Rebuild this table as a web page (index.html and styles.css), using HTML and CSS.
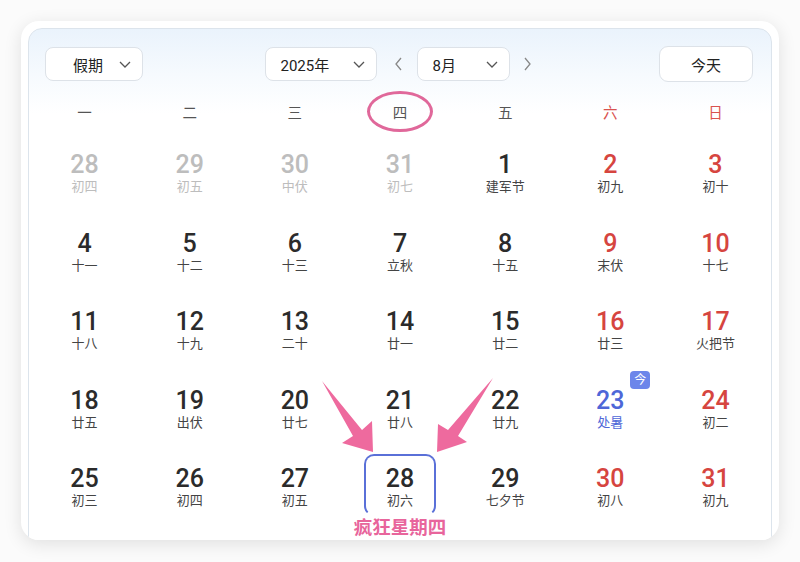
FILE: index.html
```html
<!DOCTYPE html>
<html lang="zh">
<head>
<meta charset="utf-8">
<link rel="stylesheet" href="styles.css">
</head>
<body>
<div class="card">
  <div class="panel">
    <div class="toolbar">
      <div class="left">
        <div class="select select-wide"><span>假期</span><svg class="chev" viewBox="0 0 12 7"><path d="M1 1l5 5 5-5"/></svg></div>
      </div>
      <div class="center">
        <div class="select year"><span>2025年</span><svg class="chev" viewBox="0 0 12 7"><path d="M1 1l5 5 5-5"/></svg></div>
        <svg class="nav prev" viewBox="0 0 20 20"><path d="M12 4l-5 6 5 6"/></svg>
        <div class="select month"><span>8月</span><svg class="chev" viewBox="0 0 12 7"><path d="M1 1l5 5 5-5"/></svg></div>
        <svg class="nav next" viewBox="0 0 20 20"><path d="M8 4l5 6-5 6"/></svg>
      </div>
      <div class="right">
        <div class="today-btn">今天</div>
      </div>
    </div>

    <div class="weekdays">
      <div>一</div><div>二</div><div>三</div><div class="circled">四</div><div>五</div><div class="red">六</div><div class="red">日</div>
    </div>

    <div class="days">
      <div class="day muted"><b>28</b><i>初四</i></div>
      <div class="day muted"><b>29</b><i>初五</i></div>
      <div class="day muted"><b>30</b><i>中伏</i></div>
      <div class="day muted"><b>31</b><i>初七</i></div>
      <div class="day"><b>1</b><i>建军节</i></div>
      <div class="day red"><b>2</b><i>初九</i></div>
      <div class="day red"><b>3</b><i>初十</i></div>

      <div class="day"><b>4</b><i>十一</i></div>
      <div class="day"><b>5</b><i>十二</i></div>
      <div class="day"><b>6</b><i>十三</i></div>
      <div class="day"><b>7</b><i>立秋</i></div>
      <div class="day"><b>8</b><i>十五</i></div>
      <div class="day red"><b>9</b><i>末伏</i></div>
      <div class="day red"><b>10</b><i>十七</i></div>

      <div class="day"><b>11</b><i>十八</i></div>
      <div class="day"><b>12</b><i>十九</i></div>
      <div class="day"><b>13</b><i>二十</i></div>
      <div class="day"><b>14</b><i>廿一</i></div>
      <div class="day"><b>15</b><i>廿二</i></div>
      <div class="day red"><b>16</b><i>廿三</i></div>
      <div class="day red"><b>17</b><i>火把节</i></div>

      <div class="day"><b>18</b><i>廿五</i></div>
      <div class="day"><b>19</b><i>出伏</i></div>
      <div class="day"><b>20</b><i>廿七</i></div>
      <div class="day"><b>21</b><i>廿八</i></div>
      <div class="day"><b>22</b><i>廿九</i></div>
      <div class="day today"><span class="badge">今</span><b>23</b><i>处暑</i></div>
      <div class="day red"><b>24</b><i>初二</i></div>

      <div class="day"><b>25</b><i>初三</i></div>
      <div class="day"><b>26</b><i>初四</i></div>
      <div class="day"><b>27</b><i>初五</i></div>
      <div class="day boxed"><b>28</b><i>初六</i><span class="caption">疯狂星期四</span></div>
      <div class="day"><b>29</b><i>七夕节</i></div>
      <div class="day red"><b>30</b><i>初八</i></div>
      <div class="day red"><b>31</b><i>初九</i></div>
    </div>

    <svg class="arrows" viewBox="0 0 800 562">
      <polygon points="322,381 362,430 372,421 373,452 342,443 353,436"/>
      <polygon points="493,378 458,436 467,442 437,452 438,424 448,430"/>
    </svg>
  </div>
</div>
</body>
</html>
```

FILE: styles.css
```css
html, body {
  margin: 0;
  padding: 0;
}
body {
  width: 800px;
  height: 562px;
  background: #fbfbfb;
  font-family: Roboto, "Noto Sans CJK SC", sans-serif;
  overflow: hidden;
}
.card {
  margin: 21px 0 0 21px;
  width: 758px;
  height: 519px;
  background: #fff;
  border-radius: 18px;
  box-shadow: 0 4px 18px rgba(0,0,0,0.11);
  padding: 7px 7px 0 7px;
  box-sizing: border-box;
  overflow: hidden;
}
.panel {
  height: 560px;
  border: 1px solid #dce4ec;
  border-radius: 14px;
  background: linear-gradient(180deg, #eaf3fc 0px, #f6fafe 45px, #ffffff 85px);
  padding: 17px 3px 0 3px;
  box-sizing: border-box;
}
.toolbar {
  display: grid;
  grid-template-columns: 1fr auto 1fr;
  align-items: center;
  height: 34px;
  padding: 0 15px 0 13px;
}
.left { display: flex; }
.right { display: flex; justify-content: flex-end; }
.center {
  display: flex;
  align-items: center;
  margin-left: 3px;
}
.select {
  height: 34px;
  box-sizing: border-box;
  border: 1px solid #dde2e8;
  border-radius: 8px;
  background: #fff;
  display: flex;
  align-items: center;
  justify-content: space-between;
  padding: 0 11px 0 15px;
  font-size: 15px;
  color: #222;
}
.select-wide { width: 98px; padding-left: 27px; }
.year { width: 112px; }
.month { width: 93px; }
.chev {
  width: 12px;
  height: 7px;
  fill: none;
  stroke: #555;
  stroke-width: 1.3;
}
.nav {
  width: 20px;
  height: 20px;
  fill: none;
  stroke: #888;
  stroke-width: 1.3;
}
.prev { margin: 0 8px 0 12px; }
.next { margin: 0 0 0 7px; }
.today-btn {
  width: 94px;
  height: 36px;
  box-sizing: border-box;
  border: 1px solid #dde2e8;
  border-radius: 9px;
  background: #fff;
  display: flex;
  align-items: center;
  justify-content: center;
  font-size: 15px;
  color: #222;
}
.weekdays {
  margin-top: 11px;
  display: grid;
  grid-template-columns: repeat(7, 1fr);
  height: 40px;
  align-items: center;
  text-align: center;
  font-size: 14.5px;
  color: #555;
  margin-bottom: 4px;
}
.weekdays .red { color: #d9534f; }
.circled { position: relative; }
.circled::after {
  content: "";
  position: absolute;
  left: 50%;
  top: 50%;
  width: 60px;
  height: 35px;
  margin: -20.5px 0 0 -33px;
  border: 3px solid #e0689a;
  border-radius: 50%;
}
.days {
  display: grid;
  grid-template-columns: repeat(7, 1fr);
  grid-auto-rows: 78.5px;
}
.day {
  position: relative;
  display: flex;
  flex-direction: column;
  align-items: center;
  padding-top: 16px;
  box-sizing: border-box;
}
.day b {
  font-family: Roboto, sans-serif;
  font-weight: 500;
  font-size: 25px;
  line-height: 27px;
  color: #2b2b2b;
}
.day i {
  font-style: normal;
  font-size: 13px;
  line-height: 18px;
  color: #444;
}
.day.muted b, .day.muted i { color: #bdbdbd; }
.day.red b { color: #d6453f; }
.day.today b, .day.today i { color: #4e67d8; }
.badge {
  position: absolute;
  left: 50%;
  top: 0;
  margin-left: 20px;
  width: 20px;
  height: 18px;
  border-radius: 4px;
  background: #6c86ea;
  color: #fff;
  font-size: 12px;
  line-height: 18px;
  text-align: center;
}
.boxed::before {
  content: "";
  position: absolute;
  left: 50%;
  top: 5px;
  width: 68px;
  height: 58px;
  margin-left: -36px;
  border: 2px solid #5a70d8;
  border-bottom-color: transparent;
  border-radius: 10px;
}
.caption {
  position: absolute;
  left: -20px;
  right: -20px;
  top: 68px;
  text-align: center;
  font-size: 18.5px;
  font-weight: 700;
  color: #e8659c;
  line-height: 22px;
}
.arrows {
  position: absolute;
  left: 0;
  top: 0;
  width: 800px;
  height: 562px;
  fill: #ee6a9e;
  pointer-events: none;
}
```
